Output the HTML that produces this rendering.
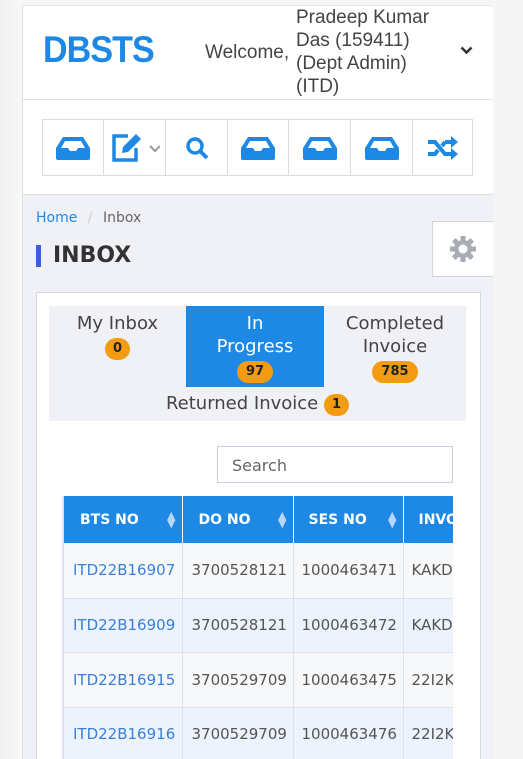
<!DOCTYPE html>
<html><head><meta charset="utf-8"><style>
*{box-sizing:border-box;margin:0;padding:0}
html,body{width:523px;height:759px;overflow:hidden}
body{background:#f5f5f5;font-family:"Liberation Sans",sans-serif;position:relative}
.a{position:absolute}
.os{font-family:"DejaVu Sans","Liberation Sans",sans-serif}
.badge{display:inline-block;background:#f39c12;color:#222;font-weight:bold;font-size:13px;border-radius:11px;height:22px;line-height:22px;padding:0 9px;text-align:center}
.btn{position:absolute;top:0;height:56px;border-right:1px solid #dcdcdc;display:flex;align-items:center;justify-content:center}
td,th{border-right:1px solid #dde2ea}
</style></head><body>
<div class="a" style="left:0;top:0;width:22px;height:759px;background:linear-gradient(90deg,#f1f1f1,#f8f8f8)"></div>
<div class="a" style="left:22px;top:5px;width:471px;height:754px;border-left:1px solid #e0e0e0;background:#f0f1f6;overflow:hidden">
</div>
<div class="a" style="left:23px;top:5px;width:470px;height:190px;background:#fff;border-top:1px solid #e6e6e6;border-bottom:1px solid #dedede"></div>
<div class="a" style="left:23px;top:99px;width:470px;height:1px;background:#e2e2e2"></div>
<div class="a" style="left:43px;top:29px;font-size:37px;font-weight:bold;color:#1e88e5;letter-spacing:-1px;transform:scaleX(0.92);transform-origin:left">DBSTS</div>
<div class="a" style="left:205px;top:42px;font-size:19px;color:#444">Welcome,</div>
<div class="a" style="left:296px;top:6px;font-size:19px;line-height:23px;color:#444;width:160px">Pradeep Kumar<br>Das (159411)<br>(Dept Admin)<br>(ITD)</div>
<svg class="a" style="left:460px;top:46px" width="13" height="9" viewBox="0 0 13 9"><path d="M1.5 1.5 6.5 6.5 11.5 1.5" stroke="#333" stroke-width="2.6" fill="none"/></svg>
<div class="a" style="left:42px;top:119px;width:431px;height:57px;border:1px solid #dcdcdc;background:#fff">
 <div class="btn" style="left:0;width:61px"><svg width="34" height="24" viewBox="0 0 34 24"><path d="M7 1h20l7 11v10a2 2 0 0 1-2 2H2a2 2 0 0 1-2-2V12z M5 12h7l2 3h6l2-3h7L25 5H9z" fill="#1e88e5" fill-rule="evenodd"/></svg></div>
 <div class="btn" style="left:61px;width:62px"><svg width="50" height="32" viewBox="0 0 50 32"><path d="M18 4H4v24h22V16" stroke="#1e88e5" stroke-width="3.5" fill="none"/><path d="M12 21l1-6 13-13 5 5-13 13z" fill="#1e88e5"/><path d="M40 14l5 5 5-5" stroke="#999" stroke-width="2" fill="none"/></svg></div>
 <div class="btn" style="left:123px;width:62px"><svg width="24" height="24" viewBox="0 0 24 24"><circle cx="10" cy="10" r="7" stroke="#1e88e5" stroke-width="3.5" fill="none"/><path d="M15 15l7 7" stroke="#1e88e5" stroke-width="4"/></svg></div>
 <div class="btn" style="left:185px;width:61px"><svg width="34" height="24" viewBox="0 0 34 24"><path d="M7 1h20l7 11v10a2 2 0 0 1-2 2H2a2 2 0 0 1-2-2V12z M5 12h7l2 3h6l2-3h7L25 5H9z" fill="#1e88e5" fill-rule="evenodd"/></svg></div>
 <div class="btn" style="left:246px;width:62px"><svg width="34" height="24" viewBox="0 0 34 24"><path d="M7 1h20l7 11v10a2 2 0 0 1-2 2H2a2 2 0 0 1-2-2V12z M5 12h7l2 3h6l2-3h7L25 5H9z" fill="#1e88e5" fill-rule="evenodd"/></svg></div>
 <div class="btn" style="left:308px;width:62px"><svg width="34" height="24" viewBox="0 0 34 24"><path d="M7 1h20l7 11v10a2 2 0 0 1-2 2H2a2 2 0 0 1-2-2V12z M5 12h7l2 3h6l2-3h7L25 5H9z" fill="#1e88e5" fill-rule="evenodd"/></svg></div>
 <div class="btn" style="left:370px;width:60px;border:none"><svg width="32" height="26" viewBox="0 0 32 26"><path d="M1 7h7l10 12h8M1 19h7l3-4M18 7h8M15 11l3-4" stroke="#1e88e5" stroke-width="4" fill="none"/><path d="M24 1l7 6-7 6zM24 13l7 6-7 6z" fill="#1e88e5"/></svg></div>
</div>
<div class="a os" style="left:36px;top:210px;font-size:14px;color:#1e88e5">Home <span style="color:#ccc;margin:0 6px">/</span> <span style="color:#666">Inbox</span></div>
<div class="a" style="left:36px;top:245px;width:5px;height:22px;background:#3f5fd8"></div>
<div class="a os" style="left:53px;top:243px;font-size:22px;font-weight:bold;color:#333">INBOX</div>
<div class="a" style="left:432px;top:221px;width:61px;height:56px;background:#fff;border:1px solid #d4d4d4;border-right:none"></div>
<svg class="a" style="left:449px;top:235px" width="28" height="28" viewBox="0 0 28 28"><g fill="#a7adb3"><circle cx="14" cy="14" r="9"/><g stroke="#a7adb3" stroke-width="5"><path d="M14 1v26M1 14h26M4.8 4.8l18.4 18.4M23.2 4.8 4.8 23.2"/></g></g><circle cx="14" cy="14" r="4.5" fill="#fff"/></svg>
<div class="a" style="left:36px;top:292px;width:445px;height:480px;background:#fff;border:1px solid #d5d8de"></div>
<div class="a os" style="left:49px;top:306px;width:417px;height:115px;background:#eff1f6"></div>
<div class="a os" style="left:49px;top:312px;width:137px;text-align:center;font-size:18px;color:#444;line-height:23px">My Inbox<br><span class="badge" style="padding:0 8px;margin-top:1px">0</span></div>
<div class="a os" style="left:186px;top:306px;width:138px;height:81px;background:#1e88e5;text-align:center;font-size:18px;color:#fff;line-height:23px;padding-top:6px">In<br>Progress<br><span class="badge" style="margin-top:0">97</span></div>
<div class="a os" style="left:324px;top:312px;width:142px;text-align:center;font-size:18px;color:#444;line-height:23px">Completed<br>Invoice<br><span class="badge" style="margin-top:0">785</span></div>
<div class="a os" style="left:49px;top:393px;width:417px;text-align:center;font-size:18px;color:#444">Returned Invoice <span class="badge" style="padding:0 8px;vertical-align:1px">1</span></div>
<div class="a os" style="left:217px;top:446px;width:236px;height:37px;border:1px solid #ccd;padding:9px 14px;font-size:16px;color:#666">Search</div>
<div class="a" style="left:62px;top:496px;width:391px;height:270px;overflow:hidden;border-left:2px solid #dde2ea">
<table class="os" style="border-collapse:collapse;width:460px;font-size:15px;color:#555">
<tr style="background:#1e88e5;color:#fff;height:47px;font-size:14px"><th style="width:118px;text-align:left;padding-left:16px;border-color:#fff">BTS NO <span style="float:right;margin-right:6px;color:#b8d6f5;font-size:11px;line-height:8px">▲<br>▼</span></th><th style="width:111px;text-align:left;padding-left:16px;border-color:#fff">DO NO <span style="float:right;margin-right:6px;color:#b8d6f5;font-size:11px;line-height:8px">▲<br>▼</span></th><th style="width:110px;text-align:left;padding-left:15px;border-color:#fff">SES NO <span style="float:right;margin-right:6px;color:#b8d6f5;font-size:11px;line-height:8px">▲<br>▼</span></th><th style="text-align:left;padding-left:15px">INVOICE</th></tr>
<tr style="background:#f7f8fa;height:55px;border-bottom:1px solid #dde2ea"><td style="padding-left:9px;color:#3a7fd8">ITD22B16907</td><td style="padding-left:9px">3700528121</td><td style="padding-left:8px">1000463471</td><td style="padding-left:8px">KAKD</td></tr>
<tr style="background:#ecf3fc;height:54px;border-bottom:1px solid #dde2ea"><td style="padding-left:9px;color:#3a7fd8">ITD22B16909</td><td style="padding-left:9px">3700528121</td><td style="padding-left:8px">1000463472</td><td style="padding-left:8px">KAKD</td></tr>
<tr style="background:#f7f8fa;height:55px;border-bottom:1px solid #dde2ea"><td style="padding-left:9px;color:#3a7fd8">ITD22B16915</td><td style="padding-left:9px">3700529709</td><td style="padding-left:8px">1000463475</td><td style="padding-left:8px">22I2K</td></tr>
<tr style="background:#ecf3fc;height:54px"><td style="padding-left:9px;color:#3a7fd8">ITD22B16916</td><td style="padding-left:9px">3700529709</td><td style="padding-left:8px">1000463476</td><td style="padding-left:8px">22I2K</td></tr>
</table></div>
</body></html>
